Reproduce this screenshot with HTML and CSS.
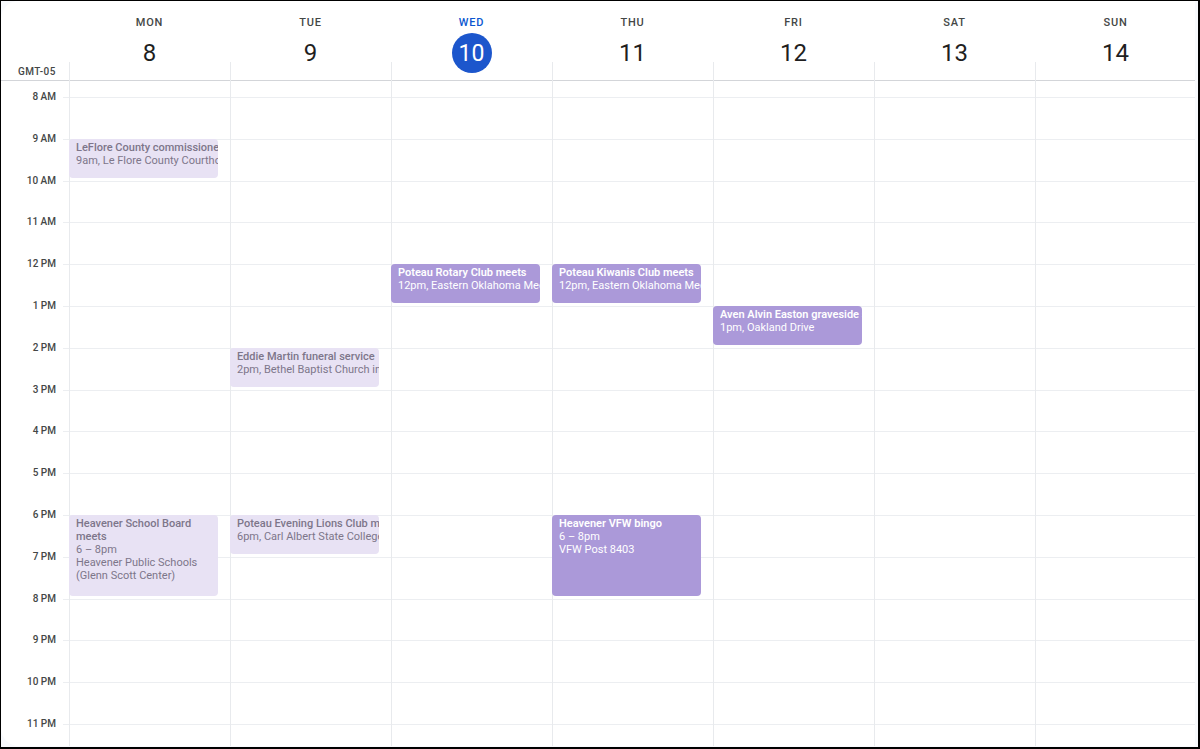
FILE: index.html
```html
<!DOCTYPE html>
<html>
<head>
<meta charset="utf-8">
<link rel="stylesheet" href="styles.css">
</head>
<body>
<div class="frame">
  <div class="card">
    <div class="header">
      <div class="heads">
        <div class="gutter"></div>
        <div class="dayhead"><div class="dname">MON</div><div class="dnum">8</div></div>
        <div class="dayhead"><div class="dname">TUE</div><div class="dnum">9</div></div>
        <div class="dayhead today"><div class="dname">WED</div><div class="dnum">10</div></div>
        <div class="dayhead"><div class="dname">THU</div><div class="dnum">11</div></div>
        <div class="dayhead"><div class="dname">FRI</div><div class="dnum">12</div></div>
        <div class="dayhead"><div class="dname">SAT</div><div class="dnum">13</div></div>
        <div class="dayhead"><div class="dname">SUN</div><div class="dnum">14</div></div>
      </div>
      <div class="allday">
        <div class="tz">GMT-05</div>
        <div class="adcell"></div>
        <div class="adcell"></div>
        <div class="adcell"></div>
        <div class="adcell"></div>
        <div class="adcell"></div>
        <div class="adcell"></div>
        <div class="adcell"></div>
      </div>
    </div>
    <div class="body">
      <div class="times">
        <div class="trow first"></div>
        <div class="trow"><span class="tlabel">8 AM</span><span class="tick"></span></div>
        <div class="trow"><span class="tlabel">9 AM</span><span class="tick"></span></div>
        <div class="trow"><span class="tlabel">10 AM</span><span class="tick"></span></div>
        <div class="trow"><span class="tlabel">11 AM</span><span class="tick"></span></div>
        <div class="trow"><span class="tlabel">12 PM</span><span class="tick"></span></div>
        <div class="trow"><span class="tlabel">1 PM</span><span class="tick"></span></div>
        <div class="trow"><span class="tlabel">2 PM</span><span class="tick"></span></div>
        <div class="trow"><span class="tlabel">3 PM</span><span class="tick"></span></div>
        <div class="trow"><span class="tlabel">4 PM</span><span class="tick"></span></div>
        <div class="trow"><span class="tlabel">5 PM</span><span class="tick"></span></div>
        <div class="trow"><span class="tlabel">6 PM</span><span class="tick"></span></div>
        <div class="trow"><span class="tlabel">7 PM</span><span class="tick"></span></div>
        <div class="trow"><span class="tlabel">8 PM</span><span class="tick"></span></div>
        <div class="trow"><span class="tlabel">9 PM</span><span class="tick"></span></div>
        <div class="trow"><span class="tlabel">10 PM</span><span class="tick"></span></div>
        <div class="trow"><span class="tlabel">11 PM</span><span class="tick"></span></div>
      </div>

      <div class="day">
        <div class="slots"><div class="slot first"></div><div class="slot"></div><div class="slot"></div><div class="slot"></div><div class="slot"></div><div class="slot"></div><div class="slot"></div><div class="slot"></div><div class="slot"></div><div class="slot"></div><div class="slot"></div><div class="slot"></div><div class="slot"></div><div class="slot"></div><div class="slot"></div><div class="slot"></div><div class="slot"></div></div>
        <div class="event past short" style="top:57.8px;height:39px">
          <div class="etitle">LeFlore County commissioners</div>
          <div class="eline">9am, Le Flore County Courthouse</div>
        </div>
        <div class="event past" style="top:434px;height:81px">
          <div class="etitle">Heavener School Board meets</div>
          <div class="eline">6 – 8pm</div>
          <div class="eline">Heavener Public Schools (Glenn Scott Center)</div>
        </div>
      </div>

      <div class="day">
        <div class="slots"><div class="slot first"></div><div class="slot"></div><div class="slot"></div><div class="slot"></div><div class="slot"></div><div class="slot"></div><div class="slot"></div><div class="slot"></div><div class="slot"></div><div class="slot"></div><div class="slot"></div><div class="slot"></div><div class="slot"></div><div class="slot"></div><div class="slot"></div><div class="slot"></div><div class="slot"></div></div>
        <div class="event past short" style="top:266.8px;height:39px">
          <div class="etitle">Eddie Martin funeral service</div>
          <div class="eline">2pm, Bethel Baptist Church in Poteau</div>
        </div>
        <div class="event past short" style="top:434px;height:39px">
          <div class="etitle">Poteau Evening Lions Club meets</div>
          <div class="eline">6pm, Carl Albert State College</div>
        </div>
      </div>

      <div class="day">
        <div class="slots"><div class="slot first"></div><div class="slot"></div><div class="slot"></div><div class="slot"></div><div class="slot"></div><div class="slot"></div><div class="slot"></div><div class="slot"></div><div class="slot"></div><div class="slot"></div><div class="slot"></div><div class="slot"></div><div class="slot"></div><div class="slot"></div><div class="slot"></div><div class="slot"></div><div class="slot"></div></div>
        <div class="event short" style="top:183.2px;height:39px">
          <div class="etitle">Poteau Rotary Club meets</div>
          <div class="eline">12pm, Eastern Oklahoma Medical Center</div>
        </div>
      </div>

      <div class="day">
        <div class="slots"><div class="slot first"></div><div class="slot"></div><div class="slot"></div><div class="slot"></div><div class="slot"></div><div class="slot"></div><div class="slot"></div><div class="slot"></div><div class="slot"></div><div class="slot"></div><div class="slot"></div><div class="slot"></div><div class="slot"></div><div class="slot"></div><div class="slot"></div><div class="slot"></div><div class="slot"></div></div>
        <div class="event short" style="top:183.2px;height:39px">
          <div class="etitle">Poteau Kiwanis Club meets</div>
          <div class="eline">12pm, Eastern Oklahoma Medical Center</div>
        </div>
        <div class="event" style="top:434px;height:81px">
          <div class="etitle">Heavener VFW bingo</div>
          <div class="eline">6 – 8pm</div>
          <div class="eline">VFW Post 8403</div>
        </div>
      </div>

      <div class="day">
        <div class="slots"><div class="slot first"></div><div class="slot"></div><div class="slot"></div><div class="slot"></div><div class="slot"></div><div class="slot"></div><div class="slot"></div><div class="slot"></div><div class="slot"></div><div class="slot"></div><div class="slot"></div><div class="slot"></div><div class="slot"></div><div class="slot"></div><div class="slot"></div><div class="slot"></div><div class="slot"></div></div>
        <div class="event short" style="top:225px;height:39px">
          <div class="etitle">Aven Alvin Easton graveside service</div>
          <div class="eline">1pm, Oakland Drive</div>
        </div>
      </div>

      <div class="day">
        <div class="slots"><div class="slot first"></div><div class="slot"></div><div class="slot"></div><div class="slot"></div><div class="slot"></div><div class="slot"></div><div class="slot"></div><div class="slot"></div><div class="slot"></div><div class="slot"></div><div class="slot"></div><div class="slot"></div><div class="slot"></div><div class="slot"></div><div class="slot"></div><div class="slot"></div><div class="slot"></div></div>
      </div>

      <div class="day">
        <div class="slots"><div class="slot first"></div><div class="slot"></div><div class="slot"></div><div class="slot"></div><div class="slot"></div><div class="slot"></div><div class="slot"></div><div class="slot"></div><div class="slot"></div><div class="slot"></div><div class="slot"></div><div class="slot"></div><div class="slot"></div><div class="slot"></div><div class="slot"></div><div class="slot"></div><div class="slot"></div></div>
      </div>
    </div>
  </div>
</div>
</body>
</html>
```

FILE: styles.css
```css
* { box-sizing: border-box; }
html, body { margin: 0; padding: 0; }
body {
  font-family: Roboto, "Liberation Sans", Arial, sans-serif;
  color: #1f1f1f;
  background: #ffffff;
}
.frame {
  width: 1200px;
  height: 749px;
  border-top: 1px solid #000;
  border-left: 1px solid #000;
  border-right: 2px solid #000;
  border-bottom: 2px solid #000;
  background: #f8fafd;
  display: flex;
  overflow: hidden;
}
.card {
  flex: 1;
  margin: 0 3px 1px 0;
  background: #fff;
  border-radius: 18px 0 0 18px;
  display: flex;
  flex-direction: column;
  overflow: hidden;
}
.header {
  flex: none;
  border-bottom: 1px solid #d3d5d9;
}
.heads, .allday, .body {
  display: grid;
  grid-template-columns: 68px repeat(7, 161px);
}
.heads { height: 61px; }
.dayhead {
  display: flex;
  flex-direction: column;
  align-items: center;
  padding-top: 15px;
}
.dname {
  font-size: 11px;
  line-height: 14px;
  font-weight: 500;
  letter-spacing: 0.8px;
  color: #444746;
}
.dnum {
  margin-top: 3px;
  width: 40px;
  height: 40px;
  border-radius: 50%;
  display: flex;
  align-items: center;
  justify-content: center;
  font-size: 24px;
  color: #1f1f1f;
  position: relative;
  z-index: 1;
}
.today .dname { color: #0b57d0; }
.today .dnum { background: #1c56cc; color: #fff; font-size: 23px; }
.allday { height: 18px; }
.tz {
  font-size: 10px;
  font-weight: 500;
  letter-spacing: 0.5px;
  color: #444746;
  text-align: right;
  padding-right: 13px;
  line-height: 18px;
  padding-top: 1px;
}
.adcell { border-left: 1px solid #e8eaed; }
.body {
  flex: 1;
  min-height: 0;
  overflow: hidden;
  align-items: start;
}
.trow {
  height: 41.8px;
  display: flex;
  align-items: flex-start;
}
.trow.first { height: 16px; }
.tlabel {
  flex: 1;
  text-align: right;
  padding-right: 7px;
  font-size: 10px;
  font-weight: 500;
  line-height: 12px;
  margin-top: -6px;
  color: #444746;
}
.tick {
  width: 6px;
  border-top: 1px solid #eceef1;
}
.day {
  position: relative;
  border-left: 1px solid #e8eaed;
}
.slot {
  height: 41.8px;
  border-top: 1px solid #eceef1;
}
.slot.first { height: 16px; border-top: 0; }
.event {
  position: absolute;
  left: -1px;
  right: 12px;
  border-radius: 4px;
  background: #ab99d9;
  color: #fff;
  font-size: 11px;
  line-height: 13px;
  padding: 2px 6px 2px 7px;
  overflow: hidden;
}
.event.short { padding-right: 0; }
.etitle { font-weight: 600; }
.event.past {
  background: #e8e2f4;
  color: #7d768a;
}
.event.past .etitle { font-weight: 500; }
.event.short .etitle, .event.short .eline {
  white-space: nowrap;
  overflow: hidden;
}
```
